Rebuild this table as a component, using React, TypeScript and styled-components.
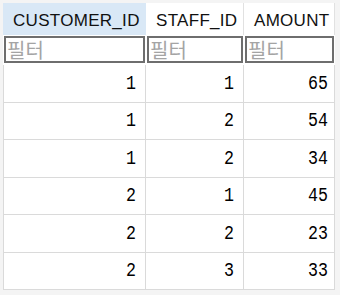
import React from "react";
import styled, { createGlobalStyle } from "styled-components";

const Global = createGlobalStyle`
  html, body { margin: 0; padding: 0; background: #f4f4f4; }
  body { font-family: "Liberation Sans", Arial, sans-serif; }
`;

const Grid = styled.div`
  margin: 3px 0 0 3px;
  width: 332px;
  display: grid;
  grid-template-columns: 143px 98px 91px;
  background: #ffffff;
`;

const HeadCell = styled.div<{ $active?: boolean }>`
  box-sizing: border-box;
  height: 32px;
  background: ${(p) => (p.$active ? "#d9e8f6" : "#ffffff")};
  border-right: 1px solid ${(p) => (p.$active ? "#d9e8f6" : "#e1e1e1")};
  padding: 4px 0 0 10px;
  font-family: "Liberation Sans", Arial, sans-serif;
  font-size: 17px;
  letter-spacing: 0.3px;
  line-height: 28px;
  color: #111;
  white-space: nowrap;
  overflow: hidden;
`;

const FilterCell = styled.div`
  box-sizing: border-box;
  height: 30px;
  padding: 1px 1px 2px 1px;
  background: #ffffff;
`;

const FilterInput = styled.input`
  box-sizing: border-box;
  width: 100%;
  height: 27px;
  margin: 0;
  border: 2px solid #6e6e6e;
  border-radius: 0;
  padding: 0 0 1px 1px;
  font-family: "Noto Sans CJK KR", sans-serif;
  font-size: 20px;
  background: #fff;
  outline: none;
  &::placeholder { color: #a4a4a4; }
`;

const DataCell = styled.div<{ $first?: boolean; $last?: boolean }>`
  box-sizing: border-box;
  height: 37.5px;
  border-bottom: 1px solid #dadada;
  border-right: 1px solid #dadada;
  border-left: ${(p) => (p.$first ? "1px solid #dadada" : "none")};
  display: flex;
  align-items: center;
  justify-content: flex-end;
  padding-right: ${(p) => (p.$last ? "6px" : "9px")};
  font-family: "Liberation Mono", monospace;
  font-size: 20px;
  color: #000;
`;

const Num = styled.span`
  display: inline-block;
  font-family: "Liberation Mono", monospace;
  transform: scaleX(0.83);
  transform-origin: 100% 50%;
`;

const rows = [
  [1, 1, 65],
  [1, 2, 54],
  [1, 2, 34],
  [2, 1, 45],
  [2, 2, 23],
  [2, 3, 33],
];

export default function App() {
  return (
    <>
      <Global />
      <Grid>
        <HeadCell $active>CUSTOMER_ID</HeadCell>
        <HeadCell>STAFF_ID</HeadCell>
        <HeadCell>AMOUNT</HeadCell>
        <FilterCell><FilterInput placeholder="필터" /></FilterCell>
        <FilterCell><FilterInput placeholder="필터" /></FilterCell>
        <FilterCell><FilterInput placeholder="필터" /></FilterCell>
        {rows.map((r, i) => (
          <React.Fragment key={i}>
            <DataCell $first><Num>{r[0]}</Num></DataCell>
            <DataCell><Num>{r[1]}</Num></DataCell>
            <DataCell $last><Num>{r[2]}</Num></DataCell>
          </React.Fragment>
        ))}
      </Grid>
    </>
  );
}
